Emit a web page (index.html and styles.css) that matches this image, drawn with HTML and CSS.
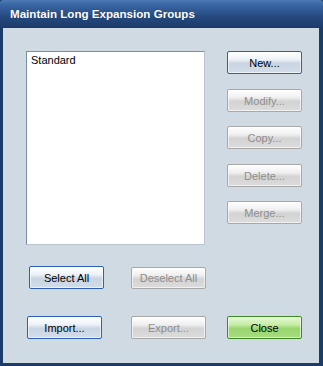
FILE: index.html
```html
<!DOCTYPE html>
<html>
<head>
<meta charset="utf-8">
<link rel="stylesheet" href="styles.css">
</head>
<body>
<div class="window">
  <div class="titlebar">Maintain Long Expansion Groups</div>
  <div class="content">
    <div class="row-top">
      <div class="list">
        <div class="item">Standard</div>
      </div>
      <div class="side">
        <button class="btn">New...</button>
        <button class="btn off">Modify...</button>
        <button class="btn off">Copy...</button>
        <button class="btn off">Delete...</button>
        <button class="btn off">Merge...</button>
      </div>
    </div>
    <div class="row-sel">
      <button class="btn">Select All</button>
      <button class="btn off">Deselect All</button>
    </div>
    <div class="row-bottom">
      <button class="btn">Import...</button>
      <button class="btn off">Export...</button>
      <button class="btn ok">Close</button>
    </div>
  </div>
</div>
</body>
</html>
```
FILE: styles.css
```css
html, body {
  margin: 0;
  padding: 0;
  background: #ffffff;
}
body {
  font-family: "Liberation Sans", Arial, sans-serif;
  font-size: 11px;
}
.window {
  width: 323px;
  height: 366px;
  box-sizing: border-box;
  background: #1c3b66;
  border-left: 3px solid #1c3b66;
  border-right: 4px solid #1c3b66;
  border-bottom: 3px solid #1c3b66;
  display: flex;
  flex-direction: column;
}
.titlebar {
  height: 28px;
  margin-left: -3px;
  margin-right: -4px;
  padding-left: 10px;
  box-sizing: border-box;
  background: linear-gradient(to bottom, #4d7ab5 0%, #3764a2 20%, #25497f 60%, #1b3b69 100%);
  color: #ffffff;
  font-weight: bold;
  font-size: 11.6px;
  line-height: 28px;
  border-top-right-radius: 3px;
  border-top-left-radius: 3px;
  text-shadow: 0 0 1px rgba(0,0,0,0.3);
}
.content {
  flex: 1;
  background: #d0dae3;
  padding-top: 23px;
  box-sizing: border-box;
}
.row-top {
  display: flex;
  gap: 22px;
  padding-left: 23px;
}
.list {
  width: 179px;
  height: 194px;
  box-sizing: border-box;
  background: #ffffff;
  border: 1px solid #7a8ea6;
  border-right-color: #b8c4d2;
  border-bottom-color: #b8c4d2;
  padding: 2px 4px;
}
.item {
  color: #000000;
  line-height: 13px;
}
.side {
  display: flex;
  flex-direction: column;
  gap: 14px;
}
.side .btn:nth-child(2),
.side .btn:nth-child(4) {
  margin-top: 1px;
}
.btn {
  width: 75px;
  height: 23px;
  box-sizing: border-box;
  font-family: "Liberation Sans", Arial, sans-serif;
  font-size: 11px;
  color: #000000;
  padding: 0;
  border: 1px solid #2c5fb5;
  border-radius: 2px;
  background: linear-gradient(to bottom, #ffffff 0%, #eef2f8 35%, #c9d5e4 55%, #d4dde9 100%);
  box-shadow: inset 0 0 0 1px rgba(255,255,255,0.6);
}
.btn.off {
  color: #8d8d8d;
  border-color: #a8a8a8;
  background: linear-gradient(to bottom, #ffffff 0%, #f0f0f0 35%, #d3d3d3 55%, #dcdcdc 100%);
}
.btn.ok {
  border-color: #3d8a25;
  background: linear-gradient(to bottom, #e4f8d4 0%, #c8eea8 35%, #99d66f 55%, #a8dc80 100%);
}
.row-sel {
  display: flex;
  margin-top: 21px;
  padding-left: 26px;
  gap: 27px;
}
.row-sel .btn:nth-child(2) {
  height: 22px;
  margin-top: 1px;
}
.row-bottom {
  display: flex;
  margin-top: 27px;
  padding-left: 24px;
}
.row-bottom .btn:nth-child(2) {
  margin-left: 29px;
}
.row-bottom .btn:nth-child(3) {
  margin-left: 21px;
}
```
